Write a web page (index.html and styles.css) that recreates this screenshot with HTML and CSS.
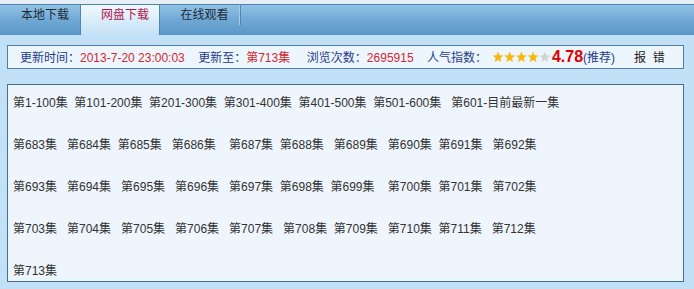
FILE: index.html
```html
<!DOCTYPE html>
<html lang="zh-CN">
<head>
    <meta charset="UTF-8">
    <title>网盘下载</title>
    <link rel="stylesheet" href="styles.css">
</head>
<body>
    <!-- 标签栏 -->
    <div class="tabbar">
        <a class="tab">本地下载</a>
        <a class="tab active">网盘下载</a>
        <a class="tab">在线观看</a>
    </div>

    <!-- 更新信息 -->
    <div class="info">
        <span class="lbl">更新时间：</span><span class="val">2013-7-20 23:00:03</span>&nbsp;&nbsp;&nbsp;
        <span class="lbl">更新至：</span><span class="val">第713集</span>&nbsp;&nbsp;&nbsp;&nbsp;
        <span class="lbl">浏览次数：</span><span class="val">2695915</span>&nbsp;&nbsp;&nbsp;
        <span class="lbl">人气指数：</span><svg class="stars" width="60" height="12" viewBox="0 0 60 12">
            <defs>
                <polygon id="star" points="6,0.6 7.5,4.2 11.4,4.5 8.4,7.1 9.3,11 6,8.9 2.7,11 3.6,7.1 0.6,4.5 4.5,4.2"/>
            </defs>
            <use href="#star" x="0" fill="#f5b80f"/>
            <use href="#star" x="11.7" fill="#f5b80f"/>
            <use href="#star" x="23.4" fill="#f5b80f"/>
            <use href="#star" x="35.1" fill="#f5b80f"/>
            <use href="#star" x="46.8" fill="#d4d4d4"/>
        </svg><span class="score">4.78</span><span class="lbl">(推荐)</span><a class="report">报&nbsp;&nbsp;错</a>
    </div>

    <!-- 剧集列表 -->
    <div class="episodes">
        <div class="row">第1-100集&nbsp;&nbsp;第101-200集&nbsp;&nbsp;第201-300集&nbsp;&nbsp;第301-400集&nbsp;&nbsp;第401-500集&nbsp;&nbsp;第501-600集&nbsp;&nbsp;&nbsp;第601-目前最新一集</div>
        <div class="row">第683集&nbsp;&nbsp;&nbsp;第684集&nbsp;&nbsp;第685集&nbsp;&nbsp;&nbsp;第686集&nbsp;&nbsp;&nbsp;&nbsp;第687集&nbsp;&nbsp;第688集&nbsp;&nbsp;&nbsp;第689集&nbsp;&nbsp;&nbsp;第690集&nbsp;&nbsp;第691集&nbsp;&nbsp;&nbsp;第692集</div>
        <div class="row">第693集&nbsp;&nbsp;&nbsp;第694集&nbsp;&nbsp;&nbsp;第695集&nbsp;&nbsp;&nbsp;第696集&nbsp;&nbsp;&nbsp;第697集&nbsp;&nbsp;第698集&nbsp;&nbsp;第699集&nbsp;&nbsp;&nbsp;&nbsp;第700集&nbsp;&nbsp;第701集&nbsp;&nbsp;&nbsp;第702集</div>
        <div class="row">第703集&nbsp;&nbsp;&nbsp;第704集&nbsp;&nbsp;&nbsp;第705集&nbsp;&nbsp;&nbsp;第706集&nbsp;&nbsp;&nbsp;第707集&nbsp;&nbsp;&nbsp;第708集&nbsp;&nbsp;第709集&nbsp;&nbsp;&nbsp;第710集&nbsp;&nbsp;第711集&nbsp;&nbsp;&nbsp;第712集</div>
        <div class="row">第713集</div>
    </div>
</body>
</html>
```

FILE: styles.css
```css
/* 基本设置 */
body {
    margin: 0;
    padding-top: 4px;
    height: 285px;
    background: linear-gradient(#e6eff6 4px, #c3e1f6 4px);
    font-family: "Liberation Sans", "Noto Sans CJK SC", sans-serif;
    font-size: 12px;
    color: #333;
    overflow: hidden;
}

/* 标签栏 */
.tabbar {
    display: flex;
    align-items: flex-start;
    height: 30px;
    border-top: 1px solid #4a82b2;
    background: linear-gradient(#92c2e4, #70a8d4 50%, #5a97c8);
}

.tab {
    box-sizing: border-box;
    width: 80px;
    height: 20px;
    padding: 2px 0 0 10px;
    line-height: 17px;
    text-align: center;
    color: #1d2b3a;
    cursor: pointer;
}

.tab:last-child {
    border-right: 1px solid #a6cfec;
    box-shadow: 1px 0 0 #4f86b4;
}

.tab.active {
    height: 30px;
    border-left: 1px solid #4f86b4;
    border-right: 1px solid #4f86b4;
    background: linear-gradient(#f2f9fe, #c3e1f6);
    color: #b0164c;
}

/* 更新信息 */
.info {
    margin: 10px 10px 0 7px;
    height: 22px;
    padding-left: 12px;
    line-height: 22px;
    border: 1px solid #4d7fa8;
    background-color: #eef6fd;
    white-space: nowrap;
}

.lbl {
    color: #1e3c8c;
}

.val {
    color: #d4262e;
}

.stars {
    vertical-align: -1px;
    margin: 0 0 0 5px;
}

.score {
    color: #e00000;
    font-size: 16px;
    font-weight: bold;
}

.report {
    margin-left: 19px;
    color: #222;
    cursor: pointer;
}

/* 剧集列表 */
.episodes {
    margin: 15px 10px 0 7px;
    padding: 8px 0 0 5px;
    height: 188px;
    border: 1px solid #3f7099;
    background-color: #eef5fc;
    color: #333;
}

.row {
    line-height: 21px;
    white-space: nowrap;
}

.row + .row {
    margin-top: 21px;
}
```
